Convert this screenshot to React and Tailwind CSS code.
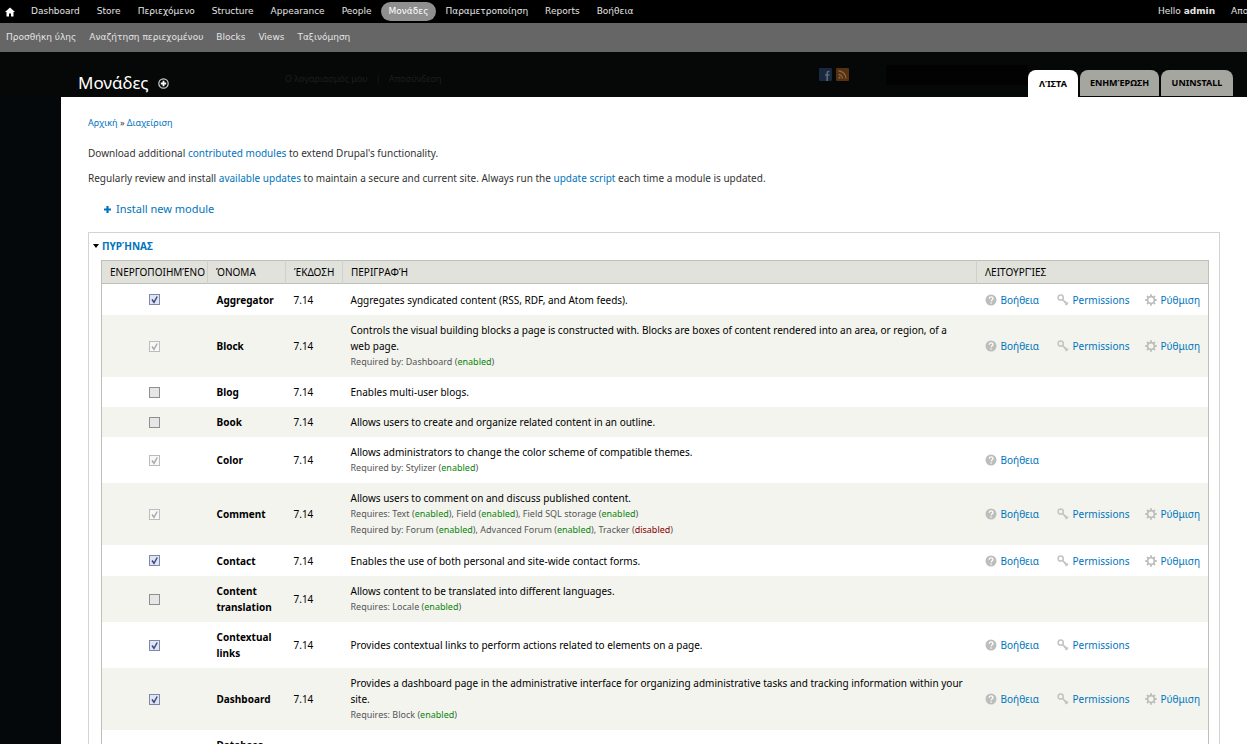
import React from 'react';

const MENU = [
  'Dashboard',
  'Store',
  'Περιεχόμενο',
  'Structure',
  'Appearance',
  'People',
  'Μονάδες',
  'Παραμετροποίηση',
  'Reports',
  'Βοήθεια',
];

const SHORTCUTS = ['Προσθήκη ύλης', 'Αναζήτηση περιεχομένου', 'Blocks', 'Views', 'Ταξινόμηση'];

const MODULES = [
  {
    name: 'Aggregator',
    checked: true,
    description: 'Aggregates syndicated content (RSS, RDF, and Atom feeds).',
    actions: ['help', 'permissions', 'configure'],
  },
  {
    name: 'Block',
    checked: true,
    locked: true,
    description:
      'Controls the visual building blocks a page is constructed with. Blocks are boxes of content rendered into an area, or region, of a web page.',
    requiredBy: [['Dashboard', true]],
    actions: ['help', 'permissions', 'configure'],
  },
  { name: 'Blog', description: 'Enables multi-user blogs.', actions: [] },
  {
    name: 'Book',
    description: 'Allows users to create and organize related content in an outline.',
    actions: [],
  },
  {
    name: 'Color',
    checked: true,
    locked: true,
    description: 'Allows administrators to change the color scheme of compatible themes.',
    requiredBy: [['Stylizer', true]],
    actions: ['help'],
  },
  {
    name: 'Comment',
    checked: true,
    locked: true,
    description: 'Allows users to comment on and discuss published content.',
    requires: [['Text', true], ['Field', true], ['Field SQL storage', true]],
    requiredBy: [['Forum', true], ['Advanced Forum', true], ['Tracker', false]],
    actions: ['help', 'permissions', 'configure'],
  },
  {
    name: 'Contact',
    checked: true,
    description: 'Enables the use of both personal and site-wide contact forms.',
    actions: ['help', 'permissions', 'configure'],
  },
  {
    name: 'Content translation',
    description: 'Allows content to be translated into different languages.',
    requires: [['Locale', true]],
    actions: [],
  },
  {
    name: 'Contextual links',
    checked: true,
    description: 'Provides contextual links to perform actions related to elements on a page.',
    actions: ['help', 'permissions'],
  },
  {
    name: 'Dashboard',
    checked: true,
    description:
      'Provides a dashboard page in the administrative interface for organizing administrative tasks and tracking information within your site.',
    requires: [['Block', true]],
    actions: ['help', 'permissions', 'configure'],
  },
  {
    name: 'Database logging',
    checked: true,
    description: '',
    actions: [],
  },
];

const HelpIcon = () => (
  <svg className="h-3 w-3 shrink-0" viewBox="0 0 12 12" aria-hidden="true">
    <circle cx="6" cy="6" r="5.5" fill="#bdbdbb" />
    <path d="M4.2 4.7c0-2.4 3.7-2.3 3.7-.2C7.9 6 6.1 5.9 6.1 7.3" fill="none" stroke="#fff" strokeWidth="1.3" />
    <circle cx="6.1" cy="9" r=".8" fill="#fff" />
  </svg>
);

const KeyIcon = () => (
  <svg className="h-3 w-3 shrink-0" viewBox="0 0 12 12" fill="none" stroke="#c3c3c1" aria-hidden="true">
    <circle cx="3.7" cy="3.5" r="2.6" strokeWidth="1.5" />
    <path d="M5.5 5.5l5 5" strokeWidth="1.7" />
    <path d="M11 8.500l-2.500 2.500M9 7.500l-1.500 1.500" strokeWidth="1.500" />
  </svg>
);

const GearIcon = () => (
  <svg className="h-3 w-3 shrink-0" viewBox="0 0 12 12" fill="none" stroke="#bdbdbb" aria-hidden="true">
    <circle cx="6" cy="6" r="3.4" strokeWidth="1.7" />
    <path
      d="M6 .3v1.800M6 9.900v1.800M.3 6h1.800M9.900 6h1.800M2 2l1.300 1.300M8.700 8.700l1.300 1.300M2 10l1.300-1.300M8.700 3.300l1.300-1.300"
      strokeWidth="1.8"
    />
  </svg>
);

const ACTIONS = [
  { key: 'help', label: 'Βοήθεια', Icon: HelpIcon },
  { key: 'permissions', label: 'Permissions', Icon: KeyIcon },
  { key: 'configure', label: 'Ρύθμιση', Icon: GearIcon },
];

const Toolbar = () => (
  <nav className="font-['DejaVu_Sans',sans-serif] text-[9px] whitespace-nowrap">
    <div className="flex h-[23px] items-center gap-px bg-black text-[#e4e4e4]">
      <a href="#home" aria-label="Home" className="ml-1 flex w-[18px]">
        <svg className="h-3 w-3" viewBox="0 0 12 12" aria-hidden="true">
          <path d="M6 1.500L1 6h1.500v4.500h2.500V7.500h2v3h2.500V6H11z" fill="#fff" />
        </svg>
      </a>
      {MENU.map((item) =>
        item === 'Μονάδες' ? (
          <a key={item} href="#modules" className="rounded-full bg-[#8f8f8f] px-2 py-[3px] text-white">
            {item}
          </a>
        ) : (
          <a key={item} href="#menu" className="px-2">
            {item}
          </a>
        )
      )}
      <div className="ml-auto flex w-[89px] gap-4 overflow-hidden">
        <a href="#user">
          Hello <strong>admin</strong>
        </a>
        <a href="#logout">Αποσύνδεση</a>
      </div>
    </div>
    <div className="flex h-[29px] items-center gap-[13px] bg-[#666] px-[6px] text-[#e4e4e4]">
      {SHORTCUTS.map((item) => (
        <a key={item} href="#shortcut">
          {item}
        </a>
      ))}
    </div>
  </nav>
);

const Header = () => (
  <header className="flex h-[45px] items-end bg-[#060707]">
    <div className="flex w-[207px] shrink-0 items-center gap-[10px] pb-1">
      <h1 className="ml-[78px] text-[17px] leading-5 text-white">Μονάδες</h1>
      <button type="button" aria-label="Add to shortcuts">
        <svg className="h-[11px] w-[11px]" viewBox="0 0 11 11" aria-hidden="true">
          <circle cx="5.5" cy="5.5" r="4.7" fill="none" stroke="#ccc" strokeWidth="1.2" />
          <path d="M5.5 2.8v5.400M2.800 5.500h5.400" stroke="#fff" strokeWidth="1.8" />
        </svg>
      </button>
    </div>
    <div className="ml-[78px] flex gap-2 pb-[10px] text-[9px] leading-4 text-[#1b1f20]">
      <a href="#account">Ο λογαριασμός μου</a>
      <span>|</span>
      <a href="#exit">Αποσύνδεση</a>
    </div>
    <div className="ml-auto flex gap-1 pb-4">
      <svg className="h-[13px] w-[13px]" viewBox="0 0 13 13" aria-hidden="true">
        <rect width="13" height="13" rx="1" fill="#17283f" />
        <path d="M10.500 3.500H9.500Q8.200 3.500 8.200 5v8M6 7h4.500" stroke="#5d6874" strokeWidth="1.7" fill="none" />
      </svg>
      <svg className="h-[13px] w-[13px]" viewBox="0 0 13 13" fill="none" aria-hidden="true">
        <rect width="13" height="13" rx="1" fill="#57300f" />
        <path d="M2.500 6.500a4 4 0 014 4M2.500 3a7.500 7.500 0 017.500 7.500" stroke="#86664a" strokeWidth="1.3" />
        <circle cx="3.5" cy="9.7" r="1.1" fill="#86664a" />
      </svg>
    </div>
    <div className="mb-3 ml-[37px] h-5 w-[142px] bg-[#020202]" />
    <div className="mr-[14px] flex gap-[2px] text-[9px] font-bold text-black">
      <a href="#list" className="flex h-[27px] w-[50px] items-center justify-center rounded-t-lg bg-white">
        ΛΊΣΤΑ
      </a>
      <a href="#update" className="mb-px flex h-[26px] w-[79px] items-center justify-center rounded-t-lg bg-[#a6a6a0]">
        ΕΝΗΜΈΡΩΣΗ
      </a>
      <a href="#uninstall" className="mb-px flex h-[26px] w-[72px] items-center justify-center rounded-t-lg bg-[#a6a6a0]">
        UNINSTALL
      </a>
    </div>
  </header>
);

const Requirements = ({ label, items }) => (
  <div className="text-[9px] leading-4 text-[#555]">
    {label}:{' '}
    {items.map(([name, enabled], i) => (
      <React.Fragment key={name}>
        {i > 0 && ', '}
        {name} (
        <span className={enabled ? 'text-[#0a850a]' : 'text-[#880000]'}>{enabled ? 'enabled' : 'disabled'}</span>)
      </React.Fragment>
    ))}
  </div>
);

const ModuleCheckbox = ({ id, checked, locked }) => (
  <span className="mx-auto grid h-[11px] w-[11px]">
    <input
      id={id}
      type="checkbox"
      defaultChecked={checked}
      disabled={locked}
      className="peer col-start-1 row-start-1 h-[11px] w-[11px] appearance-none border border-[#8e8f8f] bg-[#e6e6e6] checked:border-[#7d89a5] checked:bg-[#dfe5f3] disabled:border-[#bcbcbc] disabled:bg-[#f8f8f8]"
    />
    <svg
      className="pointer-events-none col-start-1 row-start-1 hidden h-[11px] w-[11px] text-[#3f4883] peer-checked:block peer-disabled:text-[#aaa]"
      viewBox="0 0 11 11"
      aria-hidden="true"
    >
      <path d="M3 5.500l2 2.800L8.200 2.500" fill="none" stroke="currentColor" strokeWidth="1.5" />
    </svg>
  </span>
);

const ModuleRow = ({ module, index }) => {
  const { name, checked, locked, description, requires, requiredBy, actions } = module;
  const id = `module-${index}`;

  return (
    <tr className={index % 2 ? 'bg-[#f3f4ee]' : 'bg-white'}>
      <td>
        <ModuleCheckbox id={id} checked={checked} locked={locked} />
      </td>
      <td className="py-[7px] pr-1 pl-[9px] font-bold">
        <label htmlFor={id} className="block">
          {name}
        </label>
      </td>
      <td className="px-2">{index < 10 && '7.14'}</td>
      <td className="px-2 py-[7px]">
        {description}
        {requires && <Requirements label="Requires" items={requires} />}
        {requiredBy && <Requirements label="Required by" items={requiredBy} />}
      </td>
      {ACTIONS.map(({ key, label, Icon }) => (
        <td key={key} className="py-[7px] pl-2">
          {actions.includes(key) && (
            <a href={`#${key}`} className="flex h-[17px] items-center gap-1 whitespace-nowrap text-[#0074bd]">
              <Icon />
              {label}
            </a>
          )}
        </td>
      ))}
    </tr>
  );
};

const ModuleTable = () => (
  <table className="w-full table-fixed border-collapse border border-[#bebfb9] text-[10px] leading-4 text-black">
    <colgroup>
      <col className="w-[106px]" />
      <col className="w-[78px]" />
      <col className="w-[57px]" />
      <col />
      <col className="w-[72px]" />
      <col className="w-[88px]" />
      <col className="w-[72px]" />
    </colgroup>
    <thead>
      <tr className="h-[23px] border border-[#bebfb9] bg-[#e1e2dc] text-left whitespace-nowrap">
        <th className="border-r border-[#cfd0ca] px-2 font-normal">ΕΝΕΡΓΟΠΟΙΗΜΈΝΟ</th>
        <th className="border-r border-[#cfd0ca] px-2 font-normal">ΌΝΟΜΑ</th>
        <th className="border-r border-[#cfd0ca] px-2 font-normal">ΈΚΔΟΣΗ</th>
        <th className="border-r border-[#cfd0ca] px-2 font-normal">ΠΕΡΙΓΡΑΦΉ</th>
        <th colSpan={3} className="px-2 font-normal">
          ΛΕΙΤΟΥΡΓΊΕΣ
        </th>
      </tr>
    </thead>
    <tbody>
      {MODULES.map((module, index) => (
        <ModuleRow key={module.name} module={module} index={index} />
      ))}
    </tbody>
  </table>
);

const Link = ({ children }) => (
  <a href="#link" className="text-[#0074bd]">
    {children}
  </a>
);

const App = () => (
  <div className="flex h-screen flex-col overflow-hidden bg-[#05080a] font-['Noto_Sans','Open_Sans',sans-serif]">
    <Toolbar />
    <Header />
    <main className="ml-[61px] flex-1 overflow-hidden bg-white pt-[18px] pr-[27px] pl-[27px] text-[10px] leading-4 text-[#333]">
      <div className="text-[9px]">
        <Link>Αρχική</Link> » <Link>Διαχείριση</Link>
      </div>
      <p className="mt-[14px]">
        Download additional <Link>contributed modules</Link> to extend Drupal's functionality.
      </p>
      <p className="mt-[9px]">
        Regularly review and install <Link>available updates</Link> to maintain a secure and current site. Always run
        the <Link>update script</Link> each time a module is updated.
      </p>
      <a href="#install" className="mt-[15px] ml-4 flex w-fit items-center gap-[5px] text-[11px] text-[#0074bd]">
        <svg className="h-[7px] w-[7px]" viewBox="0 0 7 7" aria-hidden="true">
          <path d="M3.500 0v7M0 3.500h7" stroke="currentColor" strokeWidth="2.200" />
        </svg>
        Install new module
      </a>
      <section className="mt-[15px] border border-[#d3d3d3] pt-[5px] pr-[10px] pb-3 pl-3">
        <button type="button" className="-ml-2 flex items-center gap-[3px] text-[10px] font-bold text-[#0074bd]">
          <svg className="h-1 w-[6px]" viewBox="0 0 6 4" aria-hidden="true">
            <path d="M0 0h6L3 4z" fill="#000" />
          </svg>
          ΠΥΡΉΝΑΣ
        </button>
        <div className="mt-[6px]">
          <ModuleTable />
        </div>
      </section>
    </main>
  </div>
);

export default App;
